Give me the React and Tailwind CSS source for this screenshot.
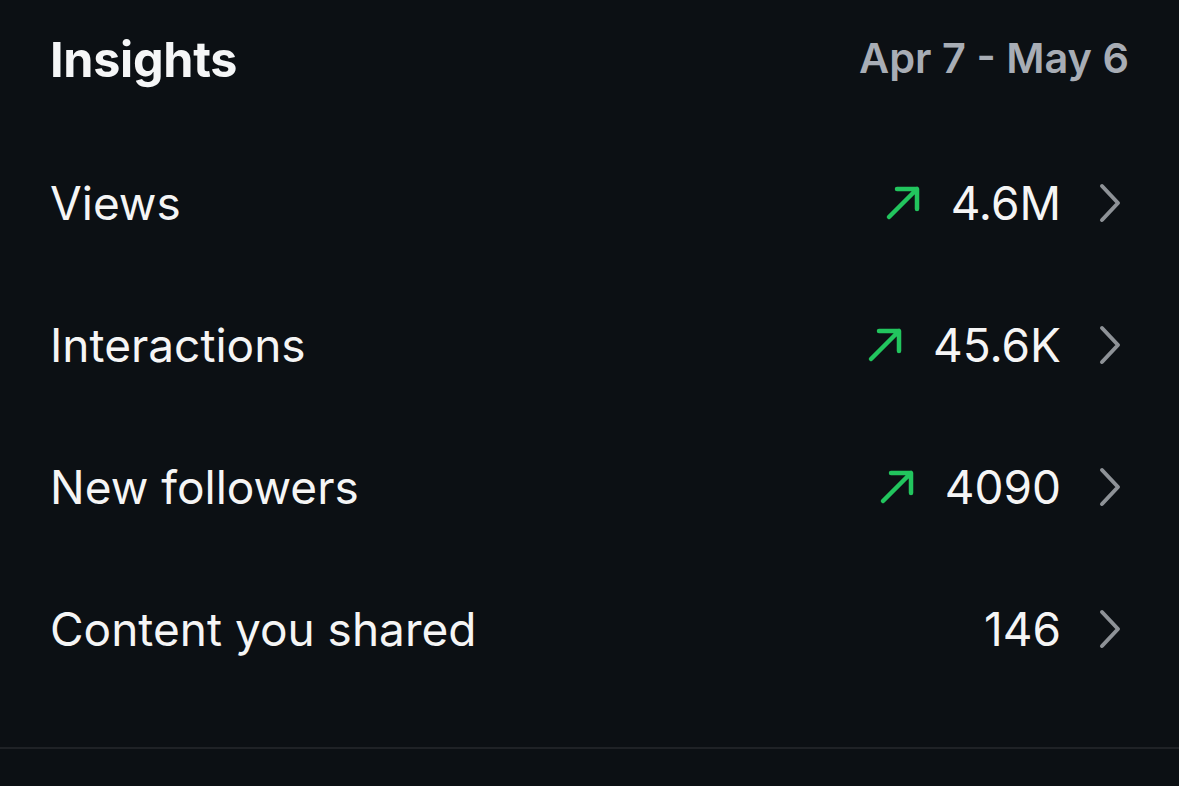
import React from "react";

const rows = [
  { label: "Views", value: "4.6M", up: true },
  { label: "Interactions", value: "45.6K", up: true },
  { label: "New followers", value: "4090", up: true },
  { label: "Content you shared", value: "146", up: false },
];

function Arrow() {
  return (
    <svg width="36" height="36" viewBox="0 0 36 36" fill="none">
      <path d="M4 32 L32 4 M12 4 H32 V24" stroke="#22c55e" strokeWidth="4.5" strokeLinecap="round" strokeLinejoin="round" />
    </svg>
  );
}

function Chevron() {
  return (
    <svg width="26" height="42" viewBox="0 0 26 42" fill="none">
      <path d="M5 4 L21 21 L5 38" stroke="#8e9297" strokeWidth="4" strokeLinecap="round" strokeLinejoin="round" />
    </svg>
  );
}

export default function App() {
  return (
    <div className="w-[1179px] h-[786px] bg-[#0c1014] text-[#f5f5f5] overflow-hidden" style={{ fontFamily: "Inter, 'Noto Sans', sans-serif" }}>
      <div className="flex items-center justify-between px-[50px] h-[120px]">
        <div className="text-[48.5px] font-bold tracking-[-0.3px] text-[#f5f6f7]">Insights</div>
        <div className="text-[41.5px] font-semibold text-[#a8adb5] -mt-[4px]">Apr 7 - May 6</div>
      </div>
      <div className="flex flex-col mt-[12px]">
        {rows.map((r) => (
          <div key={r.label} className="flex items-center justify-between h-[142px] pl-[50px] pr-[56px]">
            <div className="text-[46px] font-normal">{r.label}</div>
            <div className="flex items-center">
              {r.up && <div className="mr-[30px] flex items-center"><Arrow /></div>}
              <div className="text-[46px] font-normal">{r.value}</div>
              <div className="ml-[36px] flex items-center"><Chevron /></div>
            </div>
          </div>
        ))}
      </div>
      <div className="mt-[47px] h-[2px] bg-[#1f2226]" />
    </div>
  );
}
